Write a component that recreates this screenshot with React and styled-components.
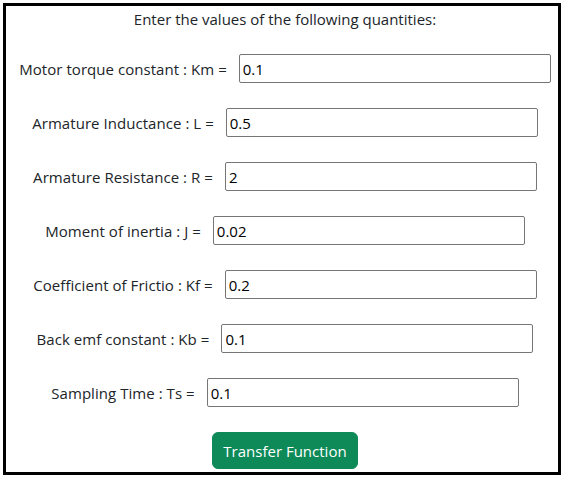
import React, { useState } from "react";
import styled, { createGlobalStyle } from "styled-components";

const Global = createGlobalStyle`
  html, body { margin: 0; padding: 0; background: #ffffff; }
  * { box-sizing: border-box; }
  body { font-family: "Open Sans", "Noto Sans", sans-serif; color: #212529; }
`;

const Frame = styled.div`
  margin: 3px;
  width: 558px;
  height: 472px;
  border: 3px solid #000000;
  background: #ffffff;
  padding: 1px 0 0 6px;
  display: flex;
  flex-direction: column;
  align-items: center;
`;

const Title = styled.div`
  font-size: 15px;
  line-height: 24px;
  height: 24px;
  text-align: center;
  margin-bottom: 23px;
`;

const Rows = styled.div`
  display: flex;
  flex-direction: column;
  align-items: center;
  gap: 25px;
  width: 100%;
`;

const Row = styled.label`
  display: flex;
  align-items: center;
  justify-content: center;
  gap: 12px;
  height: 29px;
  font-size: 15px;
  white-space: nowrap;
`;

const LabelText = styled.span`
  padding-top: 1px;
  letter-spacing: 0.05px;
`;

const Field = styled.input`
  width: 312px;
  height: 29px;
  border: 1px solid #767676;
  border-radius: 2px;
  padding: 1px 3px 0;
  font-family: "Open Sans", "Noto Sans", sans-serif;
  font-size: 15px;
  color: #000000;
  background: #ffffff;
  outline: none;
`;

const Button = styled.button`
  margin-top: 25px;
  height: 37px;
  padding: 0 10px;
  border: 1px solid #0e8a58;
  border-radius: 6px;
  background: #0e8a58;
  color: #ffffff;
  font-family: "Open Sans", "Noto Sans", sans-serif;
  font-size: 15px;
  line-height: 24px;
  cursor: pointer;
`;

const fields = [
  { label: "Motor torque constant : Km =", value: "0.1" },
  { label: "Armature Inductance : L =", value: "0.5" },
  { label: "Armature Resistance : R =", value: "2" },
  { label: "Moment of inertia : J =", value: "0.02" },
  { label: "Coefficient of Frictio : Kf =", value: "0.2" },
  { label: "Back emf constant : Kb =", value: "0.1" },
  { label: "Sampling Time : Ts =", value: "0.1" },
];

export default function App() {
  const [values, setValues] = useState(fields.map((f) => f.value));
  return (
    <>
      <Global />
      <Frame>
        <Title>Enter the values of the following quantities:</Title>
        <Rows>
          {fields.map((f, i) => (
            <Row key={f.label}>
              <LabelText>{f.label}</LabelText>
              <Field
                value={values[i]}
                onChange={(e) => {
                  const next = [...values];
                  next[i] = e.target.value;
                  setValues(next);
                }}
              />
            </Row>
          ))}
        </Rows>
        <Button type="button">Transfer Function</Button>
      </Frame>
    </>
  );
}
